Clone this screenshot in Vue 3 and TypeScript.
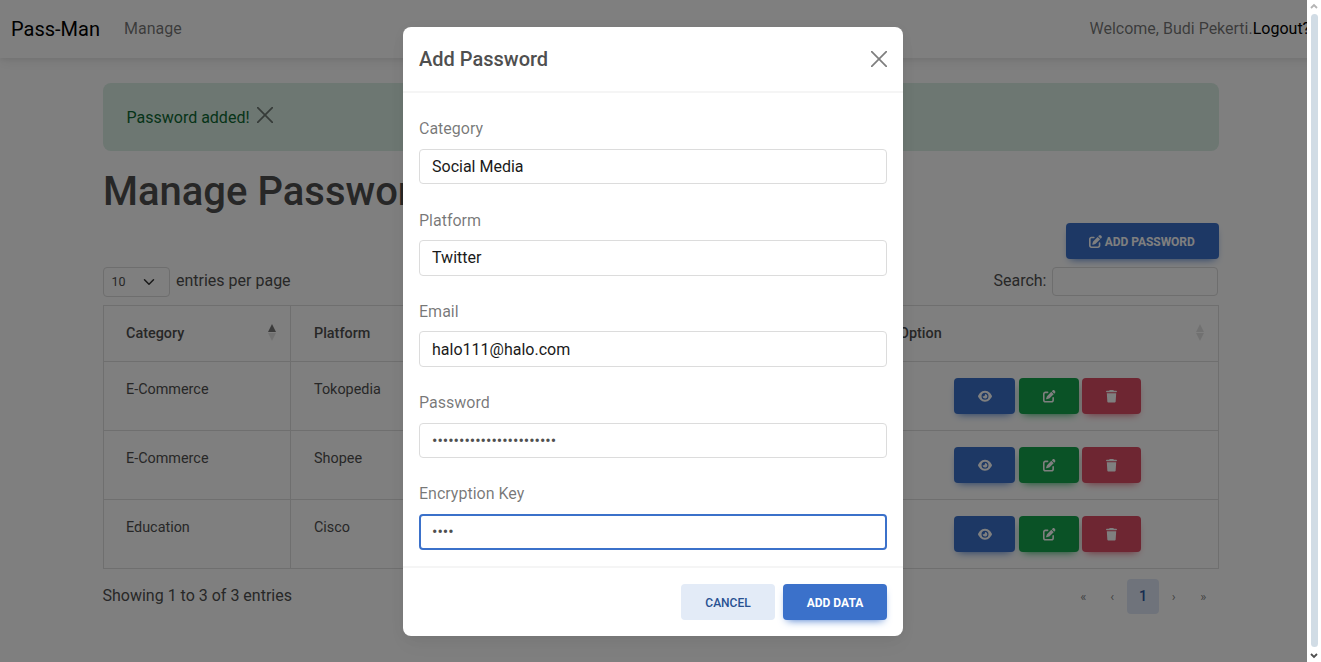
<script setup lang="ts">
import { ref } from 'vue'

interface Entry { category: string; platform: string }
interface Field { id: string; label: string; type: string; value: string; active?: boolean }

const entries: Entry[] = [
  { category: 'E-Commerce', platform: 'Tokopedia' },
  { category: 'E-Commerce', platform: 'Shopee' },
  { category: 'Education', platform: 'Cisco' },
]

const fields = ref<Field[]>([
  { id: 'category', label: 'Category', type: 'text', value: 'Social Media' },
  { id: 'platform', label: 'Platform', type: 'text', value: 'Twitter' },
  { id: 'email', label: 'Email', type: 'text', value: 'halo111@halo.com' },
  { id: 'password', label: 'Password', type: 'password', value: 'x'.repeat(23) },
  { id: 'key', label: 'Encryption Key', type: 'password', value: 'x'.repeat(4), active: true },
])

const pencilPath =
  'M471.600 21.400c-21.900-21.900-57.300-21.900-79.200 0L362.300 51.700l97.900 97.900 30.100-30.100c21.900-21.900 21.900-57.300 0-79.200L471.600 21.400zm-299.200 220c-6.100 6.100-10.800 13.600-13.500 21.900l-29.600 88.800c-2.900 8.600-.6 18.100 5.800 24.600s15.900 8.700 24.600 5.800l88.800-29.600c8.200-2.700 15.700-7.400 21.900-13.500L437.700 172.300 339.700 74.300 172.400 241.400zM96 64C43 64 0 107 0 160V416c0 53 43 96 96 96H352c53 0 96-43 96-96V320c0-17.700-14.300-32-32-32s-32 14.300-32 32v96c0 17.700-14.300 32-32 32H96c-17.700 0-32-14.300-32-32V160c0-17.700 14.300-32 32-32h96c17.700 0 32-14.300 32-32s-14.300-32-32-32H96z'
const eyePath =
  'M288 32c-80.800 0-145.500 36.800-192.600 80.600C48.600 156 17.300 208 2.500 243.700c-3.300 7.900-3.300 16.700 0 24.600C17.300 304 48.600 356 95.400 399.400C142.500 443.200 207.200 480 288 480s145.500-36.800 192.600-80.600c46.800-43.500 78.100-95.400 93-131.100c3.300-7.900 3.300-16.700 0-24.600c-14.900-35.700-46.200-87.700-93-131.100C433.500 68.800 368.800 32 288 32zM144 256a144 144 0 1 1 288 0 144 144 0 1 1-288 0zm144-64c0 35.300-28.700 64-64 64c-7.100 0-13.900-1.200-20.300-3.300c-5.500-1.800-11.900 1.600-11.700 7.400c.3 6.900 1.300 13.800 3.200 20.700c13.700 51.200 66.400 81.600 117.600 67.900s81.600-66.400 67.900-117.600c-11.100-41.500-47.800-69.400-88.600-71.100c-5.800-.2-9.200 6.100-7.400 11.700c2.100 6.400 3.300 13.200 3.300 20.300z'
const trashPath =
  'M135.200 17.700L128 32H32C14.300 32 0 46.300 0 64S14.300 96 32 96H416c17.700 0 32-14.300 32-32s-14.300-32-32-32H320l-7.200-14.300C307.400 6.800 296.300 0 284.200 0H163.800c-12.100 0-23.200 6.800-28.600 17.700zM416 128H32L53.200 467c1.600 25.300 22.600 45 47.900 45H346.900c25.300 0 46.300-19.700 47.900-45L416 128z'
</script>

<template>
  <div class="screen">
    <div class="page">
      <nav class="navbar">
        <span class="brand">Pass-Man</span>
        <span class="navlink">Manage</span>
        <span class="welcome">Welcome, Budi Pekerti.<a>Logout?</a></span>
      </nav>

      <main class="container">
        <div class="alert">
          <span class="message">Password added!</span>
          <svg class="x" viewBox="0 0 16 16"><path d="M.7.7l14.600 14.600M15.300.7L.7 15.300" /></svg>
        </div>
        <h1>Manage Passwords</h1>
        <div class="actions">
          <button class="btn primary add">
            <svg width="13" height="13" viewBox="0 0 512 512"><path :d="pencilPath" /></svg>
            <span>Add Password</span>
          </button>
        </div>
        <div class="controls">
          <div class="select">
            <span>10</span>
            <svg width="12" height="12" viewBox="0 0 16 16"><path d="M2 5l6 6 6-6" /></svg>
          </div>
          <span class="perpage">entries per page</span>
          <span class="search-label">Search:</span>
          <input class="search" type="text" />
        </div>
        <table>
          <colgroup><col class="c1" /><col class="c2" /><col class="c3" /><col class="c4" /><col class="c5" /></colgroup>
          <thead>
            <tr>
              <th><div class="head">Category<span class="sort asc"><i class="up"></i><i class="down"></i></span></div></th>
              <th>Platform</th>
              <th></th>
              <th></th>
              <th><div class="head">Option<span class="sort"><i class="up"></i><i class="down"></i></span></div></th>
            </tr>
          </thead>
          <tbody>
            <tr v-for="(entry, i) in entries" :key="i">
              <td>{{ entry.category }}</td>
              <td>{{ entry.platform }}</td>
              <td></td>
              <td></td>
              <td class="option">
                <div class="tools">
                  <button class="btn primary view"><svg width="14" height="12.500" viewBox="0 0 576 512"><path :d="eyePath" /></svg></button>
                  <button class="btn success"><svg width="12.500" height="12.500" viewBox="0 0 512 512"><path :d="pencilPath" /></svg></button>
                  <button class="btn danger"><svg width="11" height="12.500" viewBox="0 0 448 512"><path :d="trashPath" /></svg></button>
                </div>
              </td>
            </tr>
          </tbody>
        </table>
        <div class="footer">
          <span class="info">Showing 1 to 3 of 3 entries</span>
          <div class="pager">
            <span>«</span><span>‹</span><span class="current">1</span><span>›</span><span>»</span>
          </div>
        </div>
      </main>
    </div>

    <div class="backdrop"></div>

    <div class="overlay">
      <section class="modal">
        <header>
          <h5>Add Password</h5>
          <svg class="x" viewBox="0 0 16 16"><path d="M.7.7l14.600 14.600M15.300.7L.7 15.300" /></svg>
        </header>
        <div class="body">
          <div v-for="f in fields" :key="f.id" class="field">
            <label :for="f.id">{{ f.label }}</label>
            <input :id="f.id" v-model="f.value" :type="f.type" :class="{ active: f.active }" />
          </div>
        </div>
        <footer>
          <button class="btn cancel">Cancel</button>
          <button class="btn primary submit">Add data</button>
        </footer>
      </section>
    </div>

    <div class="scrollbar">
      <svg width="8" height="6" viewBox="0 0 8 6"><path d="M1 5l3-3 3 3" stroke="#b4b4b4" /></svg>
      <div class="thumb"></div>
      <svg width="8" height="6" viewBox="0 0 8 6"><path d="M1 1l3 3 3-3" stroke="#505050" /></svg>
    </div>
  </div>
</template>

<style>
html, body { overflow: hidden; }
</style>

<style scoped>
* { box-sizing: border-box; }
.screen { position: relative; width: 1321px; height: 662px; overflow: hidden; background: #fff; font-family: Roboto, sans-serif; font-size: 16px; line-height: 1.6; color: #4f4f4f; }
button, input { font-family: inherit; margin: 0; }
.page { width: 1321px; }
.navbar { height: 58px; display: flex; align-items: center; padding: 0 0 1px 11px; box-shadow: 0 4px 12px rgba(0,0,0,.07), 0 2px 4px rgba(0,0,0,.05); color: rgba(0,0,0,.55); white-space: nowrap; }
.brand { font-size: 20px; color: #000; width: 113px; }
.welcome { margin-left: auto; width: 231.500px; }
.welcome a { color: #000; }
.container { width: 1116px; margin: 25px 0 0 103px; }
.alert { height: 68px; border-radius: 8px; background: #daeee4; color: #0d6832; display: flex; align-items: center; padding-left: 23.500px; gap: 7px; }
.message { padding-top: 1px; }
.x { width: 16px; height: 16px; fill: none; stroke: #000; stroke-width: 1.700; opacity: .5; stroke-linecap: round; }
.alert .x { margin-top: -4px; }
h1 { font-size: 40px; font-weight: 500; line-height: 48px; margin: 17px 0 7px; }
.actions { display: flex; justify-content: flex-end; }
.btn { border: 0; border-radius: 4px; height: 36px; padding: 0; font-size: 12px; font-weight: 500; line-height: 18px; text-transform: uppercase; color: #fff; display: flex; align-items: center; justify-content: center; }
.btn svg { fill: currentColor; flex: none; }
.primary { background: #3b71ca; box-shadow: 0 4px 9px -4px #3b71ca; }
.success { width: 60px; background: #14a44d; box-shadow: 0 4px 9px -4px #14a44d; }
.danger { width: 59px; background: #dc4c64; box-shadow: 0 4px 9px -4px #dc4c64; }
.add { width: 153px; gap: 3px; font-weight: 700; padding: 1px 1.500px 0 0; letter-spacing: -.05px; }
.controls { display: flex; height: 30px; margin: 8px 0; align-items: center; }
.select { width: 67px; height: 30px; border: 1px solid #dcdcdc; border-radius: 4px; display: flex; align-items: center; justify-content: space-between; padding: 0 14px 0 7.500px; font-size: 12.500px; }
.select svg { fill: none; stroke: #333; stroke-width: 2; stroke-linecap: round; stroke-linejoin: round; }
.perpage { margin: -3px 0 0 6px; }
.search-label { margin: -3px 5.500px 0 auto; }
.search { width: 166px; height: 29px; margin: 0 1px 1px 0; border: 1px solid #dcdcdc; border-radius: 4px; background: transparent; }
table { width: 1116px; border-collapse: collapse; table-layout: fixed; font-size: 14.400px; line-height: 20px; }
.c1 { width: 187px; } .c2 { width: 188px; } .c3 { width: 198px; } .c4 { width: 199px; }
th, td { border: 1px solid #dfdfdf; padding: 0 23px; text-align: left; vertical-align: top; }
th:first-child, td:first-child { padding-left: 22px; }
th { height: 56px; padding-top: 17.500px; font-weight: 500; }
td { height: 69px; padding-top: 17.500px; }
.head { display: flex; justify-content: space-between; }
.sort { display: flex; flex-direction: column; gap: 1px; margin: 0 -9px 0 0; }
.sort i { border: 4.500px solid transparent; opacity: .25; }
.sort .up { border-top: 0; border-bottom: 8px solid #8f8f8f; }
.sort .down { border-bottom: 0; border-top: 8px solid #8f8f8f; }
.sort.asc .up { opacity: 1; border-bottom-color: #777; }
td.option { padding: 16px 0 0; }
.tools { display: flex; justify-content: center; gap: 3px; padding-left: 1px; }
.tools .btn { padding: 1px 0 0 1px; }
.tools .danger { padding-left: 0; }
.view { width: 61px; margin-right: 1px; }
.footer { display: flex; justify-content: space-between; margin-top: 10px; }
.info { padding-top: 4px; margin-left: -.5px; }
.pager { display: flex; align-items: center; height: 35px; margin-right: 1px; font-size: 13px; color: rgba(0,0,0,.5); }
.pager span { width: 29.500px; padding-top: 1px; text-align: center; }
.pager span:first-child { margin-right: -.5px; }
.pager .current { width: 32px; height: 35px; padding: 0; line-height: 35px; border-radius: 4px; background: #dfe7f6; color: #2c58a0; font-size: 14.400px; font-weight: 500; }
.backdrop { position: absolute; inset: 0; background: rgba(0,0,0,.5); }
.overlay { position: absolute; inset: 0 15px 0 0; display: flex; justify-content: center; align-items: flex-start; padding-top: 27px; }
.modal { width: 500px; height: 609px; background: #fff; border-radius: 8px; display: flex; flex-direction: column; box-shadow: 0 2px 15px -3px rgba(0,0,0,.07), 0 10px 20px -2px rgba(0,0,0,.04); }
header { flex: none; height: 66px; border-bottom: 2px solid #f5f5f5; padding: 0 16px; display: flex; align-items: center; justify-content: space-between; }
h5 { font-size: 20px; font-weight: 500; line-height: 24px; margin: 0; }
.body { flex: 1; min-height: 0; padding: 22.300px 16px 0; }
.field { height: 91.300px; }
.field label { display: block; height: 33.600px; color: rgba(0,0,0,.54); line-height: 27.400px; }
.field input { display: block; width: 100%; height: 35.600px; border: 1px solid #dcdcdc; border-radius: 4px; padding: 0 12px; font-size: 16px; color: #1a1a1a; outline: 0; background: #fff; }
.field:last-child { height: 70px; }
.field input[type='password'] { color: #4f4f4f; }
.field input.active { border: 2px solid #3b71ca; padding: 0 11px; }
footer { flex: none; height: 70px; border-top: 2px solid #f5f5f5; display: flex; justify-content: flex-end; align-items: center; gap: 8px; padding: 0 16px; }
footer .btn { padding-top: 1px; }
.cancel { width: 94px; background: #e3ebf7; color: #285192; }
.submit { width: 104px; font-weight: 700; }
.scrollbar { position: absolute; top: 0; right: 0; width: 14px; height: 662px; background: #fff; display: flex; flex-direction: column; align-items: center; padding: 3px 0; }
.scrollbar svg { fill: none; stroke-width: 1.800; }
.thumb { width: 7px; height: 633px; margin: 5px 0 6px; border-radius: 4px; background: #d1dce5; }
</style>
